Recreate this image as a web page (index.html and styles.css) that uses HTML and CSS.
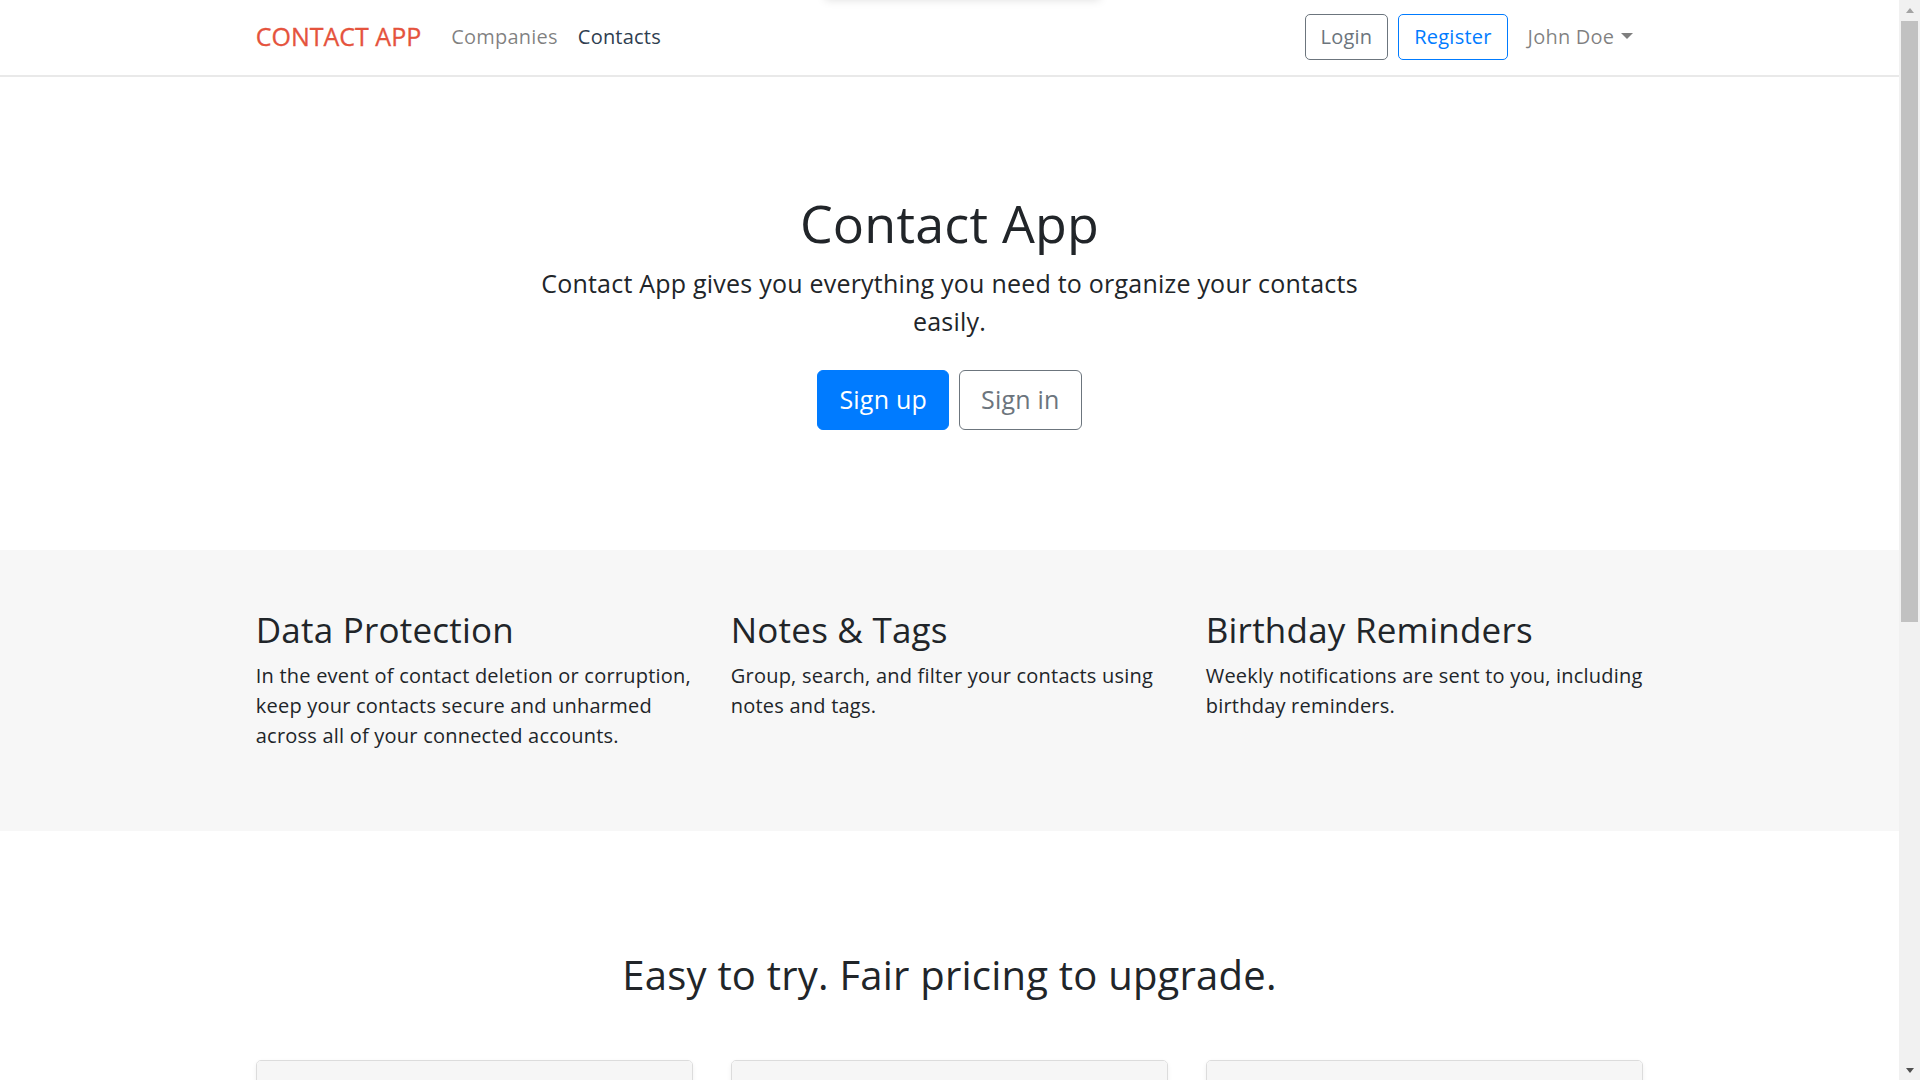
FILE: index.html
```html
<!DOCTYPE html>
<html lang="en">
<head>
<meta charset="utf-8">
<title>Contact App</title>
<link rel="stylesheet" href="styles.css">
</head>
<body>
<div class="viewport">
  <div class="page">
    <div class="top-shadow"></div>
    <nav class="navbar">
      <div class="container nav-inner">
        <a class="brand" href="#">CONTACT APP</a>
        <ul class="nav-links">
          <li><a class="nav-link" href="#">Companies</a></li>
          <li><a class="nav-link active" href="#">Contacts</a></li>
        </ul>
        <ul class="nav-right">
          <li><a class="btn btn-outline-secondary" href="#">Login</a></li>
          <li><a class="btn btn-outline-primary" href="#">Register</a></li>
          <li><a class="nav-link dropdown-toggle" href="#">John Doe</a></li>
        </ul>
      </div>
    </nav>

    <section class="hero">
      <div class="container">
        <h1 class="hero-title">Contact App</h1>
        <p class="lead">Contact App gives you everything you need to organize your contacts easily.</p>
        <div class="hero-actions">
          <a class="btn btn-lg btn-primary" href="#">Sign up</a>
          <a class="btn btn-lg btn-outline-secondary" href="#">Sign in</a>
        </div>
      </div>
    </section>

    <section class="features">
      <div class="container">
        <div class="row">
          <div class="col">
            <h3 class="feature-title">Data Protection</h3>
            <p class="feature-text">In the event of contact deletion or corruption, keep your contacts secure and unharmed across all of your connected accounts.</p>
          </div>
          <div class="col">
            <h3 class="feature-title">Notes &amp; Tags</h3>
            <p class="feature-text">Group, search, and filter your contacts using notes and tags.</p>
          </div>
          <div class="col">
            <h3 class="feature-title">Birthday Reminders</h3>
            <p class="feature-text">Weekly notifications are sent to you, including birthday reminders.</p>
          </div>
        </div>
      </div>
    </section>

    <section class="pricing">
      <div class="container">
        <h2 class="pricing-title">Easy to try. Fair pricing to upgrade.</h2>
        <div class="row">
          <div class="col"><div class="card"><div class="card-header"></div></div></div>
          <div class="col"><div class="card"><div class="card-header"></div></div></div>
          <div class="col"><div class="card"><div class="card-header"></div></div></div>
        </div>
      </div>
    </section>
  </div>

  <div class="scrollbar">
    <div class="sb-btn"><span class="tri-up"></span></div>
    <div class="sb-thumb"></div>
    <div class="sb-track"></div>
    <div class="sb-btn"><span class="tri-down"></span></div>
  </div>
</div>
</body>
</html>
```

FILE: styles.css
```css
* {
  box-sizing: border-box;
}

html, body {
  margin: 0;
  padding: 0;
}

body {
  font-family: "Open Sans", "Noto Sans", "DejaVu Sans", sans-serif;
  font-size: 20px;
  line-height: 1.5;
  letter-spacing: 0.011em;
  color: #212529;
  background: #fff;
}

a {
  text-decoration: none;
}

ul {
  list-style: none;
  margin: 0;
  padding: 0;
}

h1, h2, h3, h4, p {
  margin: 0;
  font-weight: 400;
}

.viewport {
  display: flex;
  width: 1920px;
  height: 1080px;
  overflow: hidden;
}

.page {
  position: relative;
  flex: 1;
  min-width: 0;
  height: 1080px;
  overflow: hidden;
}

.top-shadow {
  position: absolute;
  top: -30px;
  left: 825px;
  width: 275px;
  height: 30px;
  box-shadow: 0 0 10px rgba(0, 0, 0, 0.13);
  background: #fff;
}

.container {
  width: 1425px;
  margin: 0 auto;
  padding: 0 18.75px;
}

.row {
  display: flex;
  margin: 0 -18.75px;
}

.col {
  flex: 0 0 33.3333%;
  padding: 0 18.75px;
}

/* Navbar */
.navbar {
  height: 77px;
  border-bottom: 2px solid #e9e9e9;
}

.nav-inner {
  display: flex;
  align-items: center;
  height: 75px;
  padding-bottom: 1px;
}

.brand {
  font-size: 25px;
  line-height: 37.5px;
  color: #e5533d;
  margin-right: 20px;
  white-space: nowrap;
  letter-spacing: 0;
  -webkit-text-stroke: 0.3px #e5533d;
}

.nav-links {
  display: flex;
  flex: 1;
}

.nav-link {
  display: block;
  padding: 10px;
  font-size: 20px;
  line-height: 30px;
  color: rgba(0, 0, 0, 0.5);
}

.nav-link.active {
  color: #2f3e50;
}

.nav-right {
  display: flex;
  align-items: center;
  gap: 10px;
}

.nav-right .nav-link {
  padding-right: 10px;
}

.dropdown-toggle {
  display: flex;
  align-items: center;
}

.dropdown-toggle::after {
  content: "";
  display: inline-block;
  margin-left: 7px;
  border-top: 6px solid rgba(0, 0, 0, 0.5);
  border-left: 6px solid transparent;
  border-right: 6px solid transparent;
  margin-top: -2px;
}

/* Buttons */
.btn {
  display: inline-block;
  font-size: 20px;
  line-height: 30px;
  padding: 7px 15px;
  border: 1px solid transparent;
  border-radius: 5px;
  white-space: nowrap;
}

.btn-outline-secondary {
  color: #6c757d;
  border-color: #6c757d;
}

.btn-outline-primary {
  color: #007bff;
  border-color: #007bff;
}

.btn-primary {
  color: #fff;
  background: #007bff;
  border-color: #007bff;
}

.btn-lg {
  font-size: 25px;
  line-height: 37.5px;
  padding: 10px 21px;
  border-radius: 6px;
}

/* Hero */
.hero {
  padding: 115px 0 120px;
  text-align: center;
}

.hero-title {
  font-size: 52px;
  line-height: 1.2;
  margin-bottom: 11px;
}

.lead {
  font-size: 25px;
  line-height: 37.5px;
  max-width: 870px;
  margin: 0 auto 30px;
}

.hero-actions {
  display: flex;
  justify-content: center;
  gap: 10px;
}

/* Features */
.features {
  background: #f7f7f7;
  padding: 59px 0 60px;
}

.feature-title {
  font-size: 35px;
  line-height: 1.2;
  margin-bottom: 10px;
}

.feature-text {
  font-size: 20px;
  line-height: 30px;
  margin-bottom: 20px;
}

/* Pricing */
.pricing {
  padding-top: 120px;
}

.pricing-title {
  font-size: 40px;
  line-height: 1.2;
  text-align: center;
  margin-bottom: 61px;
}

.card {
  border: 1px solid #dcdcdc;
  border-radius: 5px;
  box-shadow: 0 2px 5px rgba(0, 0, 0, 0.06);
  overflow: hidden;
}

.card-header {
  background: #f6f6f6;
  height: 75px;
  border-bottom: 1px solid #e0e0e0;
}

/* Scrollbar */
.scrollbar {
  width: 21px;
  height: 1080px;
  background: #f1f1f1;
  display: flex;
  flex-direction: column;
}

.sb-btn {
  height: 21px;
  display: flex;
  align-items: center;
  justify-content: center;
  flex: 0 0 21px;
}

.tri-up {
  width: 0;
  height: 0;
  border-left: 4.5px solid transparent;
  border-right: 4.5px solid transparent;
  border-bottom: 5px solid #a3a3a3;
  margin-top: -1px;
}

.tri-down {
  width: 0;
  height: 0;
  border-left: 4.5px solid transparent;
  border-right: 4.5px solid transparent;
  border-top: 5px solid #505050;
  margin-top: 1px;
}

.sb-thumb {
  height: 601px;
  margin: 0 2px;
  background: #c1c1c1;
  flex: 0 0 601px;
}

.sb-track {
  flex: 1;
}
```
